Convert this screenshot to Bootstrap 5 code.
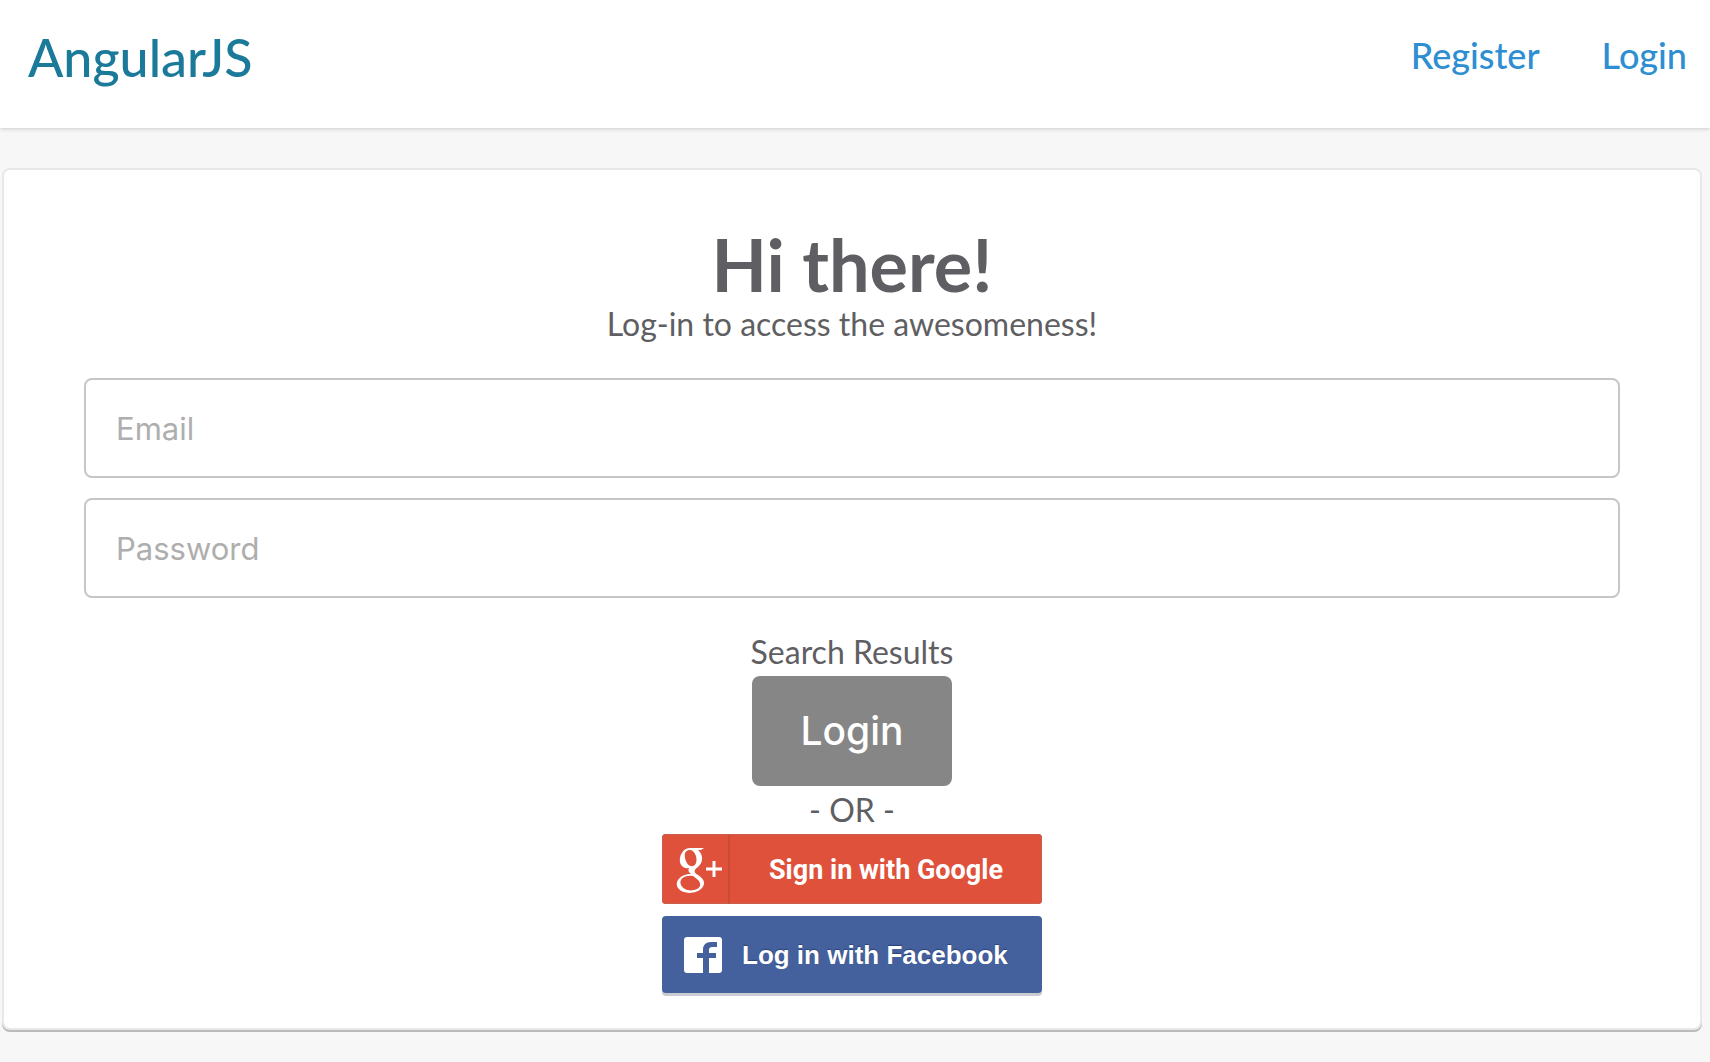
<!DOCTYPE html>
<html lang="en">
<head>
<meta charset="utf-8">
<meta name="viewport" content="width=device-width, initial-scale=1">
<title>AngularJS</title>
<link href="https://cdn.jsdelivr.net/npm/bootstrap@5.3.0/dist/css/bootstrap.min.css" rel="stylesheet">
<style>
body { background: #f7f7f7; color: #5f5f63; font: 400 32px/40px Lato, sans-serif; }
.site-nav { padding: 26px 20px 40px 28px; background: #fff; box-shadow: 0 1px 4px rgba(0,0,0,.18); }
.site-nav .navbar-brand { padding: 0; margin: 0; color: #1b7a99; font-size: 52px; font-weight: 500; line-height: 62px; }
.site-links { gap: 56px; padding-bottom: 4px; }
.site-links .nav-link { padding: 0 3px; color: #2e8ed2; font-size: 36px; font-weight: 500; line-height: 44px; }
.login-card { margin: 40px 8px 30px 2px; padding: 54px 80px 32px; border: 2px solid #e8e8e8; border-radius: 8px; box-shadow: 0 2px 0 #bababa; }
.login-card h1 { margin: 0; font-size: 72px; font-weight: 700; line-height: 80px; }
.field-stack { gap: 20px; margin: 34px 0; }
.field-stack .form-control { height: 100px; padding: 0 30px; border: 2px solid #c6c6c6; border-radius: 8px; font: 400 31px/40px Inter, sans-serif; }
.field-stack .form-control::placeholder { color: #aeaeae; }
.action-stack { gap: 4px; }
.btn-login { width: 200px; height: 110px; padding: 0; border: 0; border-radius: 8px; background: #868686; color: #fff; font: 500 39px/48px Inter, sans-serif; }
.btn-login:hover { background: #777; color: #fff; }
.social-stack { gap: 12px; width: 380px; }
.btn-social { padding: 0; border: 0; color: #fff; }
.btn-social:hover { color: #fff; }
.btn-google { height: 70px; padding-top: 1px; border-radius: 4px; background: #df513b; box-shadow: inset 0 0 0 1px #c9604f; font: 700 27px/36px Roboto, sans-serif; }
.btn-google .g-mark { width: 68px; padding-right: 5px; border-right: 2px solid #c94b38; }
.btn-google:hover { background: #d24935; }
.btn-facebook { height: 77px; margin-bottom: 3px; border-radius: 4px; background: #44619d; box-shadow: 0 3px 0 #c9cbd1; font: 700 26px/36px "Liberation Sans", sans-serif; text-shadow: 0 -1px 1px #2b427a; }
.btn-facebook:hover { background: #3a5690; }
.btn-facebook .f-mark { margin: 0 20px 0 22px; }
</style>
<script src="https://cdn.jsdelivr.net/npm/bootstrap@5.3.0/dist/js/bootstrap.bundle.min.js"></script>
</head>
<body>
<nav class="site-nav d-flex justify-content-between align-items-center">
  <a class="navbar-brand" href="#">AngularJS</a>
  <div class="nav site-links">
    <a class="nav-link" href="#register">Register</a>
    <a class="nav-link" href="#login">Login</a>
  </div>
</nav>
<main class="card login-card text-center">
  <h1>Hi there!</h1>
  <div>Log-in to access the awesomeness!</div>
  <form>
    <div class="field-stack d-flex flex-column">
      <input class="form-control" type="email" placeholder="Email" aria-label="Email">
      <input class="form-control" type="password" placeholder="Password" aria-label="Password">
    </div>
    <div class="action-stack d-flex flex-column align-items-center">
      <div>Search Results</div>
      <button class="btn btn-login" type="submit">Login</button>
      <div>- OR -</div>
      <div class="social-stack d-flex flex-column">
        <button class="btn btn-social btn-google d-flex align-items-stretch" type="button">
          <span class="g-mark d-flex align-items-center justify-content-end">
            <svg class="flex-shrink-0" width="56" height="56" viewBox="0 0 56 56" fill="none" stroke="#fff" aria-hidden="true">
              <path fill="#fff" fill-rule="evenodd" stroke="none" d="M23 6H37L34 8H31C37 13 36 21 31 25C27 28 26 30 31 33C37 37 39 41 35 46C30 52 16 53 11 46C7 39 14 32 24 32C21 30 21 28 22 26C15 27 12 22 13 16C14 10 18 6 23 6ZM22 8C17 9 17 14 19 19C21 25 27 26 29 21C31 15 27 7 22 8ZM26 34C16 33 12 38 14 43C17 50 30 50 33 44C34 39 30 37 26 34Z"/>
              <path stroke-width="3" d="M39 27H55M47 19V35"/>
            </svg>
          </span>
          <span class="flex-fill align-self-center">Sign in with Google</span>
        </button>
        <button class="btn btn-social btn-facebook d-flex align-items-center" type="button">
          <svg class="f-mark flex-shrink-0" width="38" height="36" viewBox="0 0 38 36" aria-hidden="true">
            <rect width="38" height="36" rx="3" fill="#fff"/>
            <path fill="#44619d" d="M19 36V21H13V16H19V13Q19 5 27 5H33V10H28Q25 10 25 13V16H32V21H25V36Z"/>
          </svg>
          <span>Log in with Facebook</span>
        </button>
      </div>
    </div>
  </form>
</main>
</body>
</html>
